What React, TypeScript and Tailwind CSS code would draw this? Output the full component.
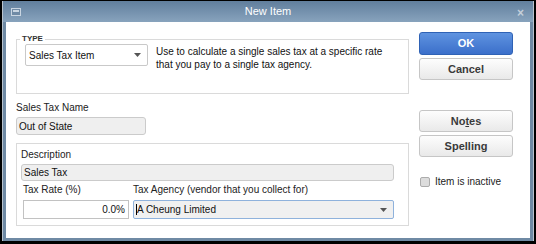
import React from "react";

const font = { fontFamily: '"Liberation Sans", Arial, sans-serif' };

function Caret() {
  return (
    <svg width="7" height="4" viewBox="0 0 7 4" className="shrink-0">
      <path d="M0 0 H7 L3.5 4 Z" fill="#555" />
    </svg>
  );
}

function GrayButton({ children }: { children: React.ReactNode }) {
  return (
    <button className="w-full h-[22px] rounded-[3px] border border-[#c6c6c6] bg-gradient-to-b from-[#fdfdfd] to-[#e9e9e9] text-[11px] font-bold text-[#3a3a3a] leading-none">
      {children}
    </button>
  );
}

export default function App() {
  return (
    <div style={font} className="w-[536px] h-[244px] bg-black pt-[1px] px-[2px] pb-[3px]">
      <div className="h-full flex flex-col border-x border-[#b9c3cd]">
        {/* title bar */}
        <div className="relative h-[21px] shrink-0 flex items-center justify-center bg-gradient-to-b from-[#617f9d] to-[#88a3bd]">
          <svg width="10" height="8" viewBox="0 0 10 8" className="absolute left-[8px] top-[7px]">
            <rect x="0.5" y="0.5" width="9" height="7" fill="#6f8aa5" stroke="#c9d5e1" />
            <rect x="2" y="2" width="6" height="2" fill="#c9d5e1" />
          </svg>
          <span className="text-[11px] text-white">New Item</span>
          <span className="absolute right-[9px] top-[3px] text-[12px] font-bold text-[#c4cfda]">×</span>
        </div>

        {/* body */}
        <div className="flex-1 flex bg-white border-x-[3px] border-b-[3px] border-[#6f8aa4] pl-[10px] pr-[14px] gap-[10px]">
          {/* left column */}
          <div className="w-[393px] pt-[17px] flex flex-col">
            <div className="relative h-[55px] border border-[#dadada] pt-[4px] pl-[8px] flex gap-[8px]">
              <span className="absolute -top-[6px] left-[3px] bg-white px-[2px] text-[8px] font-bold text-[#333] leading-[10px]">
                TYPE
              </span>
              <div className="w-[123px] h-[22px] border border-[#c9c9c9] rounded-[2px] bg-white flex items-center justify-between pl-[3px] pr-[6px]">
                <span className="text-[10px] text-[#111]">Sales Tax Item</span>
                <Caret />
              </div>
              <p className="pt-[1px] text-[10px] leading-[13px] text-[#111]">
                Use to calculate a single sales tax at a specific rate
                <br />
                that you pay to a single tax agency.
              </p>
            </div>

            <label className="mt-[8px] text-[10px] leading-[12px] text-[#222]">Sales Tax Name</label>
            <div className="mt-[3px] w-[130px] h-[18px] rounded-[3px] border border-[#cbcbcb] bg-[#efefef] pl-[2px] flex items-center text-[10px] text-[#111]">
              Out of State
            </div>

            <div className="mt-[8px] h-[83px] border border-[#dadada] pl-[4px] pr-[14px] pt-[5px] flex flex-col">
              <span className="text-[10px] leading-[12px] text-[#222]">Description</span>
              <div className="mt-[3px] h-[17px] rounded-[3px] border border-[#cbcbcb] bg-[#efefef] pl-[2px] flex items-center text-[10px] text-[#111]">
                Sales Tax
              </div>
              <div className="mt-[3px] pl-[2px] flex gap-[4px]">
                <div className="w-[106px] flex flex-col">
                  <span className="text-[10px] leading-[12px] text-[#222]">Tax Rate (%)</span>
                  <div className="mt-[4px] h-[19px] border border-[#c2c2c2] bg-white pr-[3px] flex items-center justify-end text-[10px] text-[#111]">
                    0.0%
                  </div>
                </div>
                <div className="flex-1 flex flex-col">
                  <span className="text-[10px] leading-[12px] text-[#222]">Tax Agency (vendor that you collect for)</span>
                  <div className="mt-[4px] h-[19px] rounded-[2px] border border-[#8fb2dc] bg-[#f0f0f0] pl-[2px] pr-[6px] flex items-center justify-between">
                    <span className="flex items-center text-[10px] text-[#111]">
                      <span className="w-[1px] h-[11px] bg-black" />
                      A Cheung Limited
                    </span>
                    <Caret />
                  </div>
                </div>
              </div>
            </div>
          </div>

          {/* right column */}
          <div className="w-[94px] pt-[10px] flex flex-col">
            <button className="h-[23px] rounded-[3px] border border-[#2f62b5] bg-gradient-to-b from-[#5f93e0] to-[#3b6fca] text-[11px] font-bold text-white leading-none">
              OK
            </button>
            <div className="mt-[3px] h-[23px] flex">
              <GrayButton>Cancel</GrayButton>
            </div>
            <div className="mt-[29px] flex flex-col gap-[3px]">
              <GrayButton>
                No<span className="underline">t</span>es
              </GrayButton>
              <GrayButton>
                Spellin<span className="underline">g</span>
              </GrayButton>
            </div>
            <div className="mt-[17px] pl-[1px] flex items-center gap-[5px]">
              <span className="w-[10px] h-[10px] rounded-[2px] border border-[#acacac] bg-[#dcdcdc]" />
              <span className="text-[10px] text-[#222]">Item is inactive</span>
            </div>
          </div>
        </div>
      </div>
    </div>
  );
}
